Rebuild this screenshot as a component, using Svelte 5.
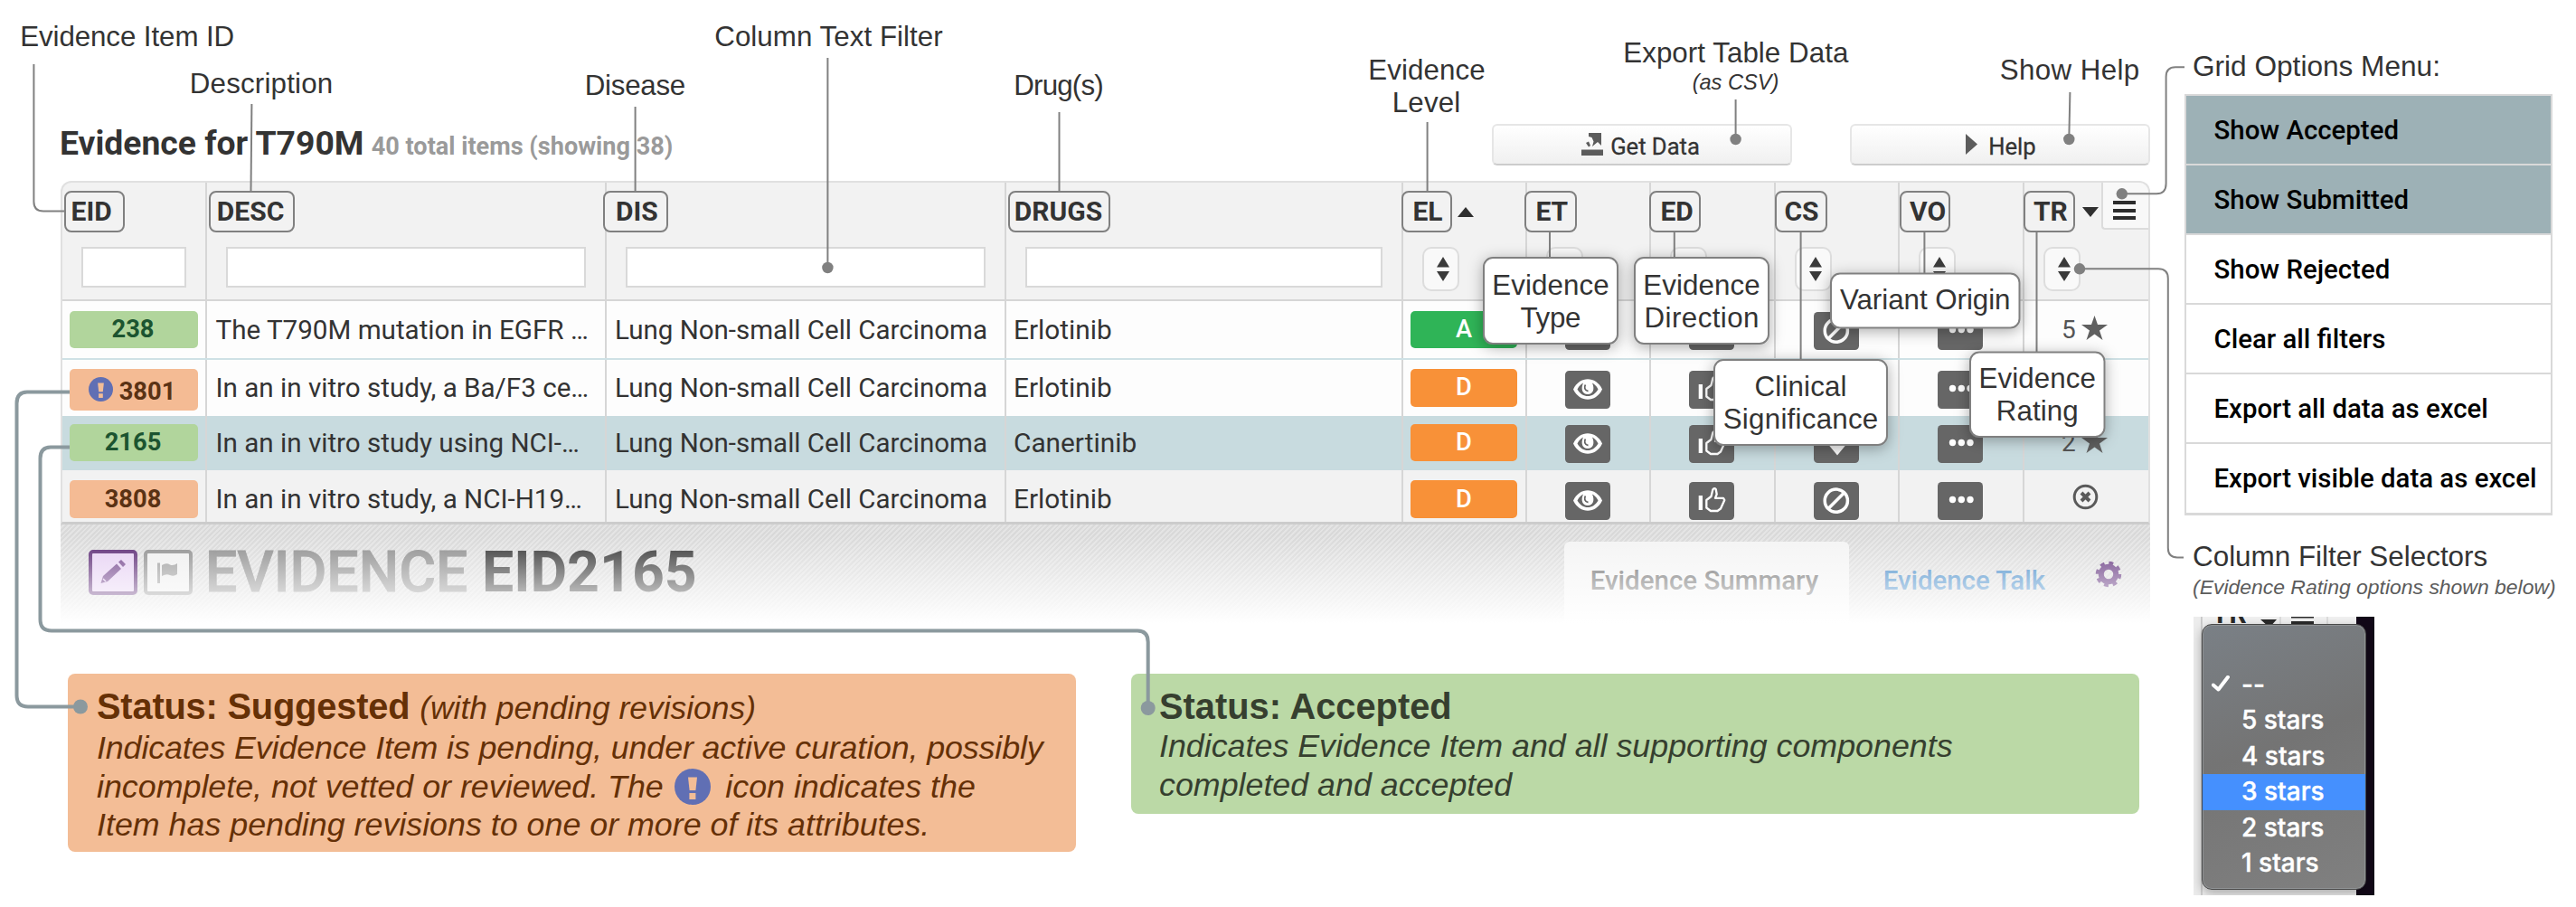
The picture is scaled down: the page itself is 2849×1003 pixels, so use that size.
<script>
  // Grid columns: width, header chip offset/width, label inset, and filter type
  const columns = [
    { label: 'EID', w: 160, ml: 2, cw: 67, pl: 5.6, filter: 'text' },
    { label: 'DESC', w: 442, ml: 2, cw: 95, pl: 6.8, filter: 'text' },
    { label: 'DIS', w: 442, ml: -4, cw: 72, pl: 12, filter: 'text' },
    { label: 'DRUGS', w: 439, ml: 2, cw: 113, pl: 4.8, filter: 'text' },
    { label: 'EL', w: 137, ml: -2, cw: 56, pl: 10.4, filter: 'select', sort: 'up' },
    { label: 'ET', w: 137, ml: -3, cw: 58, pl: 10.4, filter: 'select' },
    { label: 'ED', w: 138, ml: -2, cw: 57, pl: 10.4, filter: 'select' },
    { label: 'CS', w: 137, ml: -1, cw: 58, pl: 8.4, filter: 'select' },
    { label: 'VO', w: 138, ml: 0, cw: 56, pl: 9, filter: 'select' },
    { label: 'TR', w: 137, ml: -1, cw: 57, pl: 9, filter: 'select', sort: 'down', menu: true }
  ];

  const rows = [
    { id: '238', status: 'accepted', desc: 'The T790M mutation in EGFR …', drug: 'Erlotinib', level: 'A', cs: 'ban', rating: '5' },
    { id: '3801', status: 'suggested', flagged: true, desc: 'In an in vitro study, a Ba/F3 ce…', drug: 'Erlotinib', level: 'D', cs: 'ban', rating: null },
    { id: '2165', status: 'accepted', desc: 'In an in vitro study using NCI-…', drug: 'Canertinib', level: 'D', cs: 'down', rating: '2' },
    { id: '3808', status: 'suggested', desc: 'In an in vitro study, a NCI-H19…', drug: 'Erlotinib', level: 'D', cs: 'ban', rating: null }
  ];

  const options = [
    { text: 'Show Accepted', on: true },
    { text: 'Show Submitted', on: true },
    { text: 'Show Rejected' },
    { text: 'Clear all filters' },
    { text: 'Export all data as excel' },
    { text: 'Export visible data as excel' }
  ];

  const stars = ['', '--', '5 stars', '4 stars', '3 stars', '2 stars', '1 stars'];

  // Callout captions: centre x, baseline y
  const captions = [
    { t: 'Evidence Item ID', x: 140.7, y: 51, w: 237 },
    { t: 'Description', x: 289, y: 102.7, w: 158.5 },
    { t: 'Disease', x: 702.5, y: 105, w: 111.5 },
    { t: 'Column Text Filter', x: 916.5, y: 51, w: 252.5 },
    { t: 'Drug(s)', x: 1171, y: 105, w: 99.5 },
    { t: 'Evidence', x: 1578, y: 88.3, w: 129.5 },
    { t: 'Level', x: 1577.5, y: 124, w: 75.5 },
    { t: 'Export Table Data', x: 1919.8, y: 69.3, w: 249 },
    { t: 'Show Help', x: 2289, y: 88, w: 154.5 }
  ];

  const bubbles = [
    { x: 1641, y: 285, w: 148, h: 95, lines: [['Evidence', 325.7, 129.5], ['Type', 361.7, 67]] },
    { x: 1808, y: 285, w: 148, h: 95, lines: [['Evidence', 325.7, 129.5], ['Direction', 361.7, 127]] },
    { x: 1896, y: 398, w: 191, h: 94, lines: [['Clinical', 437.9, 102], ['Significance', 473.7, 171.5]] },
    { x: 2025, y: 302.5, w: 208.5, h: 60, lines: [['Variant Origin', 341.7, 188.5]] },
    { x: 2179, y: 389.5, w: 148.5, h: 93.5, lines: [['Evidence', 428.7, 129.5], ['Rating', 465, 91]] }
  ];

  const leaders = [
    'M37.4 71V223Q37.4 233.5 48 233.5H71',
    'M278.4 115L277.5 211',
    'M702.6 118V211',
    'M915.4 64V296',
    'M1171.5 124V211',
    'M1578.6 135V211',
    'M1919.6 110V154',
    'M2289.4 102L2288.3 154',
    'M2346.8 214.3H2385Q2395.6 214.3 2395.6 203V85Q2395.6 74.3 2406 74.3H2416',
    'M2300 297.3H2387Q2397.8 297.3 2397.8 308V606Q2397.8 616.4 2408 616.4H2415',
    'M1714 256V285',
    'M1851.8 256V285',
    'M1991.6 256V398',
    'M2128.4 256V302',
    'M2252.5 256V389'
  ];
  const dots = [[915.4, 296], [1919.6, 154], [2288.3, 154], [2346.8, 214.3], [2300, 297.3]];
</script>

{#snippet alertIcon(cls)}
  <svg class={cls} viewBox="0 0 40 40">
    <circle cx="20" cy="20" r="20" fill="#606fb4" />
    <path d="M15 9.5h10l-1.6 14.5h-6.8z" fill="#f3bd96" />
    <rect x="16.4" y="27" width="7" height="7" fill="#f3bd96" />
  </svg>
{/snippet}

{#snippet tile(kind)}
  <svg class="tile" viewBox="0 0 50 42">
    <rect width="50" height="42" rx="4.5" fill="#666" />
    {#if kind === 'eye'}
      <path d="M9 20.5C16 5.5 34 5.5 41 20.5C34 35.5 16 35.5 9 20.5Z" fill="#fff" />
      <path d="M13.5 20.5C15.5 16.500 18 14.5 20 13.5C17 20 19 26 25 26C31 26 33 20 30 13.5C32 14.5 34.5 16.5 36.5 20.5C31 30.5 19 30.5 13.5 20.5Z" fill="#666" />
      <path d="M22.5 15.5C20.8 18 21.5 22 25.5 22.5" fill="none" stroke="#666" stroke-width="1.8" />
    {:else if kind === 'thumb'}
      <rect x="10.7" y="15" width="4.3" height="16" fill="#fff" />
      <path d="M19.3 20L24.5 16L26.3 8.5Q28 6 29.7 8L30.7 13.5L29 17.8H38L39.3 20L35 29.5L31.5 32H24L19.3 28.5Z" fill="none" stroke="#fff" stroke-width="2.3" stroke-linejoin="round" />
    {:else if kind === 'ban'}
      <circle cx="24.8" cy="20.7" r="12.6" fill="none" stroke="#fff" stroke-width="3.5" />
      <path d="M16.5 29L33 12.5" stroke="#fff" stroke-width="3.5" />
    {:else if kind === 'down'}
      <path d="M20 8H32V19H38L26 33.5L14 19H20Z" fill="#fff" />
    {:else}
      <circle cx="16.5" cy="19.5" r="3.7" fill="#fff" />
      <circle cx="26.3" cy="19.5" r="3.7" fill="#fff" />
      <circle cx="36" cy="19.5" r="3.7" fill="#fff" />
    {/if}
  </svg>
{/snippet}

<div class="page">
  <div class="left">
    <header class="bar">
      <h1>Evidence for T790M <small>40 total items (showing 38)</small></h1>
      <button class="btn">
        <svg width="24" height="25" viewBox="0 0 24 25" fill="#5c5c5c">
          <path d="M0 18.5H24V25H0Z" />
          <path d="M8 0H22V14L18 10L12 15L13.5 9.5L11.5 5L8 4Z" />
          <path d="M5 11L8 9.5L10 14L8 15.5Z" />
        </svg>
        Get Data
      </button>
      <button class="btn help">
        <svg width="13" height="23" viewBox="0 0 13 23"><path d="M0 0L13 11.5L0 23Z" fill="#5c5c5c" /></svg>
        Help
      </button>
    </header>

    <div class="grid">
      <div class="head">
        {#each columns as c}
          <div class="cell" style="width:{c.w}px">
            <div class="title">
              <span class="chip" style="margin-left:{c.ml}px;width:{c.cw}px;padding-left:{c.pl}px">{c.label}</span>
              {#if c.sort === 'up'}
                <svg class="sort up" viewBox="0 0 18 11"><path d="M9 0L18 11H0Z" fill="#2f2f2f" /></svg>
              {:else if c.sort === 'down'}
                <svg class="sort" viewBox="0 0 18 11"><path d="M0 0H18L9 11Z" fill="#2f2f2f" /></svg>
              {/if}
              {#if c.menu}
                <span class="burger"><i></i><i></i><i></i></span>
              {/if}
            </div>
            {#if c.filter === 'text'}
              <input class="filter" aria-label={c.label} />
            {:else}
              <span class="select">
                <svg width="14" height="27" viewBox="0 0 14 27" fill="#3a3a3a"><path d="M7 0L14 11.5H0Z M0 16H14L7 27Z" /></svg>
              </span>
            {/if}
          </div>
        {/each}
      </div>

      {#each rows as r, i}
        <div class="row r{i}">
          <div class="cell id">
            <span class="badge {r.status}" class:flagged={r.flagged}>
              {#if r.flagged}{@render alertIcon('mini')}{/if}{r.id}
            </span>
          </div>
          <div class="cell text desc">{r.desc}</div>
          <div class="cell text desc dis">Lung Non-small Cell Carcinoma</div>
          <div class="cell text drug">{r.drug}</div>
          <div class="cell lvl"><span class="level" class:a={r.level === 'A'}>{r.level}</span></div>
          <div class="cell ic">{@render tile('eye')}</div>
          <div class="cell ic wide">{@render tile('thumb')}</div>
          <div class="cell ic">{@render tile(r.cs)}</div>
          <div class="cell ic wide">{@render tile('dots')}</div>
          <div class="cell rate">
            {#if r.rating}
              <span>{r.rating}</span>
              <svg width="29" height="27" viewBox="0 0 29 27"><path d="M14.5 0L18 10H29L20 16.5L23.5 27L14.5 20.5L5.5 27L9 16.5L0 10H11Z" fill="#606060" /></svg>
            {:else}
              <svg class="none" width="29" height="29" viewBox="0 0 29 29" fill="none" stroke="#5a5a5a">
                <circle cx="14.5" cy="14.5" r="12.3" stroke-width="3" />
                <path d="M10 10L19 19M19 10L10 19" stroke-width="4" />
              </svg>
            {/if}
          </div>
        </div>
      {/each}
    </div>

    <section class="detail">
      <svg class="sq" viewBox="0 0 54 50">
        <rect x="2" y="2" width="50" height="46" rx="3" fill="#e6d0f3" stroke="#562370" stroke-width="4" />
        <path d="M13.5 37L16 29L31 15.5L36 21L21 35ZM33 13.5L36 11L41 16L38 19Z" fill="#6b3a86" />
        <path d="M16 32L19 35" stroke="#e6d0f3" stroke-width="1.5" />
      </svg>
      <svg class="sq" viewBox="0 0 54 50">
        <rect x="2" y="2" width="50" height="46" rx="3" fill="#efefef" stroke="#8c8c8c" stroke-width="4" />
        <path d="M15 14.5H18V37H15ZM20 17Q25 14 29 16.5Q33 18 37 15V27Q33 30 29 28Q25 26 20 29Z" fill="#999" />
      </svg>
      <h2><em>EVIDENCE</em> EID2165</h2>
      <span class="tab">Evidence Summary</span>
      <a class="talk" href="#talk">Evidence Talk</a>
      <svg class="gear" viewBox="-15 -15 30 30" fill="none" stroke="#5b2a78">
        <circle r="8.2" stroke-width="6" />
        <circle r="12" stroke-width="4.5" stroke-dasharray="4.7 4.725" />
      </svg>
    </section>

    <div class="notes">
      <section class="note orange">
        <h3>Status: Suggested <i>(with pending revisions)</i></h3>
        <p class="tight">Indicates Evidence Item is pending, under active curation, possibly</p>
        <p class="mix">incomplete, not vetted or reviewed. The {@render alertIcon('big')} icon indicates the</p>
        <p>Item has pending revisions to one or more of its attributes.</p>
      </section>
      <section class="note green">
        <h3>Status: Accepted</h3>
        <p>Indicates Evidence Item and all supporting components</p>
        <p>completed and accepted</p>
      </section>
    </div>
  </div>

  <aside>
    <h4>Grid Options Menu:</h4>
    <ul class="menu">
      {#each options as o}<li class:on={o.on}>{o.text}</li>{/each}
    </ul>
    <h4 class="second">Column Filter Selectors</h4>
    <p class="sub">(Evidence Rating options shown below)</p>
    <div class="shot">
      <span class="tr">TR</span>
      <svg class="bits" viewBox="0 0 180 8">
        <path d="M74 3H92L84 12Z M108 0H133V1.5H108Z M108 5H133V8H108Z" fill="#2a2a2a" />
        <path d="M8.5 0V8M96 0V8M148 0V8" stroke="#c8c8c8" />
      </svg>
      <ul class="drop">
        {#each stars as s}
          <li class:hot={s === '3 stars'}>
            {#if s === '--'}
              <svg class="tick" viewBox="0 0 20 18"><path d="M1.8 10.5L7.5 15.5L18 1.8" fill="none" stroke="#fff" stroke-width="4" stroke-linecap="round" stroke-linejoin="round" /></svg>
            {/if}{s}
          </li>
        {/each}
      </ul>
    </div>
  </aside>

  <svg class="overlay" viewBox="0 0 2849 1003">
    <defs>
      <filter id="lift" x="-30%" y="-40%" width="160%" height="180%">
        <feDropShadow dx="0" dy="3" stdDeviation="8" flood-color="#000" flood-opacity="0.32" />
      </filter>
    </defs>
    <g fill="none" stroke="#808080" stroke-width="2">
      {#each leaders as d}<path {d} />{/each}
    </g>
    {#each dots as [x, y]}<circle cx={x} cy={y} r="6.2" fill="#808080" />{/each}
    <g fill="none" stroke="#8b999e" stroke-width="4">
      <path d="M77 433.5H30Q18.5 433.5 18.5 446V769Q18.5 781.5 31 781.5H89" />
      <path d="M77 494.5H56Q44.5 494.5 44.5 507V685Q44.5 697.5 57 697.5H1258Q1269.7 697.5 1269.7 710V783" />
    </g>
    <circle cx="89" cy="781.5" r="8" fill="#8b999e" />
    <circle cx="1269.7" cy="783" r="8" fill="#8b999e" />
    {#each bubbles as b}
      <rect x={b.x} y={b.y} width={b.w} height={b.h} rx="10" fill="#fff" stroke="#808080" stroke-width="2" filter="url(#lift)" />
      {#each b.lines as [t, y, w]}
        <text x={b.x + b.w / 2} {y} textLength={w}>{t}</text>
      {/each}
    {/each}
    {#each captions as c}
      <text x={c.x} y={c.y} textLength={c.w}>{c.t}</text>
    {/each}
    <text class="csv" x="1919.5" y="99">(as CSV)</text>
  </svg>
</div>

<style>
  :global(body) { background: #fff; }
  * { box-sizing: border-box; }
  .page {
    position: relative;
    display: flex;
    width: 2849px;
    height: 1003px;
    overflow: hidden;
    background: #fff;
    font-family: Roboto, sans-serif;
    color: #333;
  }
  .left { width: 2378px; padding: 137px 0 0 67px; flex: none; }
  h1, h2, h3, h4, p, ul { margin: 0; padding: 0; font-weight: inherit; list-style: none; }

  .bar { display: flex; align-items: center; height: 46px; margin-bottom: 17px; }
  h1 { flex: 1; margin-left: -1px; font-size: 37.3px; line-height: 47px; font-weight: 700; white-space: nowrap; }
  small { margin-left: -1px; font-size: 27.1px; font-weight: 700; color: #9a9a9a; }
  .btn {
    display: flex; align-items: center; justify-content: center; gap: 8px;
    width: 332px; height: 46px; padding: 3px 3px 0 0;
    font: 400 25.6px Roboto, sans-serif; color: #333; -webkit-text-stroke: 0.3px #333;
    border: 2px solid #e6e6e6; border-bottom-color: #ccc; border-radius: 6px;
    background: linear-gradient(#fff, #f0f0f0);
  }
  .help { margin-left: 64px; gap: 12px; padding-right: 0; padding-left: 2px; }
  .btn svg { margin-top: -4px; }

  .grid { width: 2311px; height: 380px; border: 2px solid #e0e0e0; border-bottom: 3px solid #ccc; border-radius: 12px 12px 0 0; background: #f2f2f2; overflow: hidden; }
  .head, .row { display: flex; }
  .head { height: 131px; border-bottom: 2px solid #d6d6d6; }
  .cell { flex: none; border-right: 2px solid #d6d6d6; }
  .cell:last-child { border-right: 0; }
  .head .cell { padding-top: 8.5px; }
  .title { display: flex; align-items: flex-start; height: 62.5px; }
  .chip {
    flex: none; height: 46.5px; border: 2px solid #808080; border-radius: 8px; position: relative;
    background: #f2f2f2; font-size: 30px; line-height: 42px; font-weight: 700; white-space: nowrap;
  }
  .sort { width: 18px; height: 11px; margin: 18.5px 0 0 8px; flex: none; }
  .sort.up { margin-left: 6px; }
  .burger {
    display: flex; flex-direction: column; gap: 4.5px; width: 52px; height: 52px; flex: none;
    margin: -8.5px 0 0 3px; padding: 20px 14px 0 11px;
    border: solid #dcdcdc; border-width: 0 0 2px 2px; border-radius: 0 0 0 4px; background: #f8f8f8;
  }
  .burger i { height: 4px; flex: none; background: #2c2c2c; }
  .filter { display: block; width: calc(100% - 42px); height: 45px; margin-left: 20.5px; padding: 0; border: 2px solid #d9d9d9; background: #fff; }
  .select { display: flex; align-items: center; justify-content: center; width: 41px; height: 49px; margin-left: 21px; padding-left: 4px; border: 2px solid #ddd; border-radius: 10px; background: #f9f9f9; }

  .row { height: 65px; background: #fdfdfd; --top: 10.5px; }
  .row .cell { padding-top: var(--top); }
  .r0 { border-bottom: 2px solid #cfe1e5; }
  .r1 { height: 62px; --top: 10px; }
  .r2 { height: 60px; --top: 8.8px; background: #c8dbdf; }
  .r3 { height: 57px; --top: 11.3px; background: #f2f2f2; }
  .id { width: 160px; padding-left: 8px; }
  .badge, .level { display: flex; align-items: center; justify-content: center; height: 41.5px; border-radius: 5px; font-size: 27.3px; font-weight: 700; line-height: 41px; }
  .badge { width: 142px; padding-right: 2px; }
  .badge.flagged { height: 46px; padding: 4px 4px 0 0; }
  .accepted { background: #b1d59c; color: #1c5430; }
  .suggested { background: #f4bb94; color: #5a3214; }
  .badge :global(.mini) { width: 27px; height: 27px; margin: -6px 7px 0 0; }
  .text { font-size: 29.6px; line-height: 42.5px; white-space: nowrap; color: #333; }
  .desc { width: 442px; padding-left: 9.5px; }
  .dis { padding-left: 9px; font-size: 29.5px; }
  .drug { width: 439px; padding-left: 8px; font-size: 29.8px; }
  .lvl { width: 137px; padding-left: 8px; }
  .level { width: 118px; background: #f89138; color: #fff; font-weight: 500; }
  .level.a { background: #2fb457; }
  .ic { width: 137px; padding-left: 42px; }
  .ic.wide { width: 138px; }
  .tile { display: block; width: 50px; height: 42px; margin-top: 1.7px; }
  .rate { display: flex; width: 137px; padding-left: 41px; font-size: 28px; line-height: 42px; color: #555; }
  .rate svg { margin: 5px 0 0 6px; }
  .rate .none { margin: 4px 0 0 12px; }

  .detail {
    position: relative; display: flex; align-items: center; height: 110px; padding: 0 31px 5px 31px;
    background: repeating-linear-gradient(135deg, #d9d9d9 0 2px, #e4e4e4 2px 4px);
  }
  .detail::after { content: ''; position: absolute; inset: 0; background: linear-gradient(rgba(255,255,255,0) 12px, #fff 109px); }
  .sq { width: 54px; height: 50px; margin-right: 7px; flex: none; }
  h2 { margin-left: 7px; flex: 1; font-size: 62.6px; line-height: 70px; font-weight: 700; color: #333; white-space: nowrap; }
  h2 em { font-style: normal; font-weight: 500; color: #8c8c8c; -webkit-text-stroke: 0.8px #8c8c8c; }
  .tab { width: 315px; height: 91px; align-self: flex-end; margin-bottom: -5px; padding: 22px 0 0 29px; background: #f4f4f4; border-radius: 6px 6px 0 0; font-size: 29.5px; font-weight: 500; line-height: 42px; color: #666; white-space: nowrap; }
  .talk { margin: 18px 55px 0 38px; font-size: 29.4px; font-weight: 500; line-height: 42px; color: #3a84c5; text-decoration: none; white-space: nowrap; }
  .gear { width: 30px; height: 30px; margin: 5px 0 0; flex: none; }

  .notes { display: flex; align-items: flex-start; gap: 61px; margin: 55px 0 0 8px; font-family: 'Liberation Sans', sans-serif; }
  .note { width: 1115px; height: 197px; padding: 13px 0 0 32px; border-radius: 8px; white-space: nowrap; }
  .orange { background: #f3bd96; color: #653006; }
  .green { height: 155px; padding-left: 31px; background: #bbd9a6; color: #363f2f; }
  h3 { font-size: 39.8px; line-height: 46px; font-weight: 700; }
  .orange h3 { letter-spacing: -0.18px; }
  h3 i { font-size: 35.4px; font-weight: 400; letter-spacing: 0; }
  .note p { font-size: 35.8px; line-height: 42.7px; height: 42.7px; font-style: italic; }
  .note .tight { letter-spacing: -0.12px; }
  .mix { display: flex; align-items: center; }
  .mix :global(.big) { width: 40px; height: 40px; margin: 0 16.5px 0 12px; flex: none; }

  aside { padding: 53px 0 0 38px; font-family: 'Liberation Sans', sans-serif; }
  h4 { padding-left: 9px; font-size: 31.6px; line-height: 40px; white-space: nowrap; }
  .menu { width: 407px; height: 466px; margin-top: 11px; border: 2px solid #d9d9d9; border-bottom-width: 3px; font: 500 29.4px Roboto, sans-serif; color: #000; }
  .menu li { height: 77.1px; padding-left: 30.5px; line-height: 76px; border-bottom: 2px solid #d9d9d9; white-space: nowrap; }
  .menu li:last-child { height: 75px; border: 0; }
  .menu .on { background: #9db1b6; }
  .second { margin-top: 26px; font-size: 31.4px; }
  .sub { padding-left: 9px; font-size: 22.95px; line-height: 26px; font-style: italic; color: #5c5c5c; white-space: nowrap; }
  .shot { position: relative; width: 200px; height: 308px; margin: 20px 0 0 10px; overflow: hidden; background: linear-gradient(90deg, #ececec 0 8px, #d0d0d0 8px 10px, #f0f0f0 10px 180px, #120818 180px); }
  .tr { position: absolute; left: 20px; top: -20px; font: 700 30px/34px Roboto, sans-serif; letter-spacing: 1px; color: #2a2a2a; }
  .bits { position: absolute; left: 0; top: 0; width: 180px; height: 8px; }
  .drop {
    position: absolute; left: 9px; top: 8px; width: 182px; height: 294px; padding-top: 7px;
    border: 1px solid #4a4a4a; border-radius: 11px; background: linear-gradient(160deg, #7a8086, #747474 45%, #808080);
    box-shadow: 0 4px 12px rgba(0, 0, 0, .3), inset 0 0 0 1px #8f9294; overflow: hidden;
    font: 500 28px Inter, sans-serif; color: #fff; -webkit-text-stroke: 0.4px #fff;
  }
  .drop li { position: relative; height: 39.5px; padding-left: 43px; line-height: 39.5px; white-space: nowrap; }
  .drop .hot { background: #4590fe; }
  .tick { position: absolute; left: 10px; top: 9px; width: 20px; height: 18px; }

  .overlay { position: absolute; left: 0; top: 0; width: 2849px; height: 1003px; pointer-events: none; }
  text { font-family: 'Liberation Sans', sans-serif; font-size: 31.3px; fill: #333; text-anchor: middle; }
  .csv { font-size: 23.6px; font-style: italic; }
</style>
